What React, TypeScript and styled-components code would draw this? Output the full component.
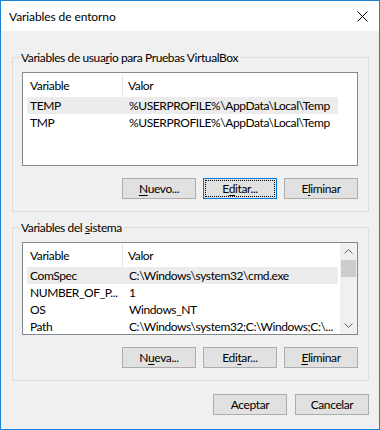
import React from "react";
import styled, { createGlobalStyle } from "styled-components";

const GlobalStyle = createGlobalStyle`
  html, body { margin: 0; padding: 0; background: #f0f0f0; }
  body { font-family: Lato, "Liberation Sans", sans-serif; font-size: 12px; letter-spacing: -0.4px; color: #000; }
`;

type Row = { name: string; value: string; selected?: boolean };

const userVars: Row[] = [
  { name: "TEMP", value: "%USERPROFILE%\\AppData\\Local\\Temp", selected: true },
  { name: "TMP", value: "%USERPROFILE%\\AppData\\Local\\Temp" },
];

const systemVars: Row[] = [
  { name: "ComSpec", value: "C:\\Windows\\system32\\cmd.exe", selected: true },
  { name: "NUMBER_OF_P...", value: "1" },
  { name: "OS", value: "Windows_NT" },
  { name: "Path", value: "C:\\Windows\\system32;C:\\Windows;C:\\..." },
];

const Chevron = ({ up }: { up?: boolean }) => (
  <svg width="9" height="5" viewBox="0 0 9 5">
    <polyline
      points={up ? "0.5,4.5 4.5,0.5 8.5,4.5" : "0.5,0.5 4.5,4.5 8.5,0.5"}
      fill="none"
      stroke="#606060"
      strokeWidth="1"
    />
  </svg>
);

const VarList = ({ rows, height, scroll }: { rows: Row[]; height: number; scroll?: boolean }) => (
  <ListBox $height={height}>
    <ListBody>
      <Header>
        <HeaderCell $first>Variable</HeaderCell>
        <HeaderCell>Valor</HeaderCell>
      </Header>
      {rows.map((r) => (
        <ListRow key={r.name} $selected={r.selected}>
          <NameCell>{r.name}</NameCell>
          <ValueCell>{r.value}</ValueCell>
        </ListRow>
      ))}
    </ListBody>
    {scroll && (
      <ScrollBar>
        <ScrollArrow><Chevron up /></ScrollArrow>
        <ScrollTrack>
          <Thumb />
        </ScrollTrack>
        <ScrollArrow><Chevron /></ScrollArrow>
      </ScrollBar>
    )}
  </ListBox>
);

const App = () => {
  return (
    <>
      <GlobalStyle />
      <Window>
        <TitleBar>
          <Title>Variables de entorno</Title>
          <CloseBtn>
            <svg width="11" height="11" viewBox="0 0 11 11">
              <path d="M0.5 0.5 L10.5 10.5 M10.5 0.5 L0.5 10.5" stroke="#000" strokeWidth="1" />
            </svg>
          </CloseBtn>
        </TitleBar>
        <Body>
          <Group>
            <Legend>Variables de usua<u>r</u>io para Pruebas VirtualBox</Legend>
            <VarList rows={userVars} height={94} />
            <ButtonRow>
              <Button><u>N</u>uevo...</Button>
              <Button $focused>E<u>d</u>itar...</Button>
              <Button>E<u>l</u>iminar</Button>
            </ButtonRow>
          </Group>
          <Group $second>
            <Legend>Variables del <u>s</u>istema</Legend>
            <VarList rows={systemVars} height={93} scroll />
            <ButtonRow>
              <Button>N<u>u</u>eva...</Button>
              <Button>Edi<u>t</u>ar...</Button>
              <Button><u>E</u>liminar</Button>
            </ButtonRow>
          </Group>
          <DialogButtons>
            <Button>Aceptar</Button>
            <Button>Cancelar</Button>
          </DialogButtons>
        </Body>
      </Window>
    </>
  );
};

// STYLED COMPONENTS //
const Window = styled.div`
  width: 380px;
  height: 430px;
  box-sizing: border-box;
  border: 1px solid #1883d7;
  background: #f0f0f0;
  display: flex;
  flex-direction: column;
`;

const TitleBar = styled.div`
  height: 30px;
  background: #fff;
  display: flex;
  align-items: center;
  justify-content: space-between;
  padding-left: 8px;
`;

const Title = styled.div`
  font-size: 12px;
  letter-spacing: -0.1px;
`;

const CloseBtn = styled.div`
  width: 46px;
  height: 30px;
  display: flex;
  align-items: center;
  justify-content: center;
  margin-right: -6px;
`;

const Body = styled.div`
  flex: 1;
  display: flex;
  flex-direction: column;
  padding: 19px 10px 0 11px;
`;

const Group = styled.fieldset<{ $second?: boolean }>`
  margin: ${(p) => (p.$second ? "8px" : "0")} 0 0 0;
  padding: 7px 10px 12px 9px;
  border: 1px solid #dcdcdc;
  min-width: 0;
  display: flex;
  flex-direction: column;
`;

const Legend = styled.legend`
  padding: 0 2px;
  margin-left: -3px;
  line-height: 15px;
`;

const ListBox = styled.div<{ $height: number }>`
  height: ${(p) => p.$height}px;
  box-sizing: border-box;
  border: 1px solid #828790;
  background: #fff;
  display: flex;
  overflow: hidden;
`;

const ListBody = styled.div`
  flex: 1;
  display: flex;
  flex-direction: column;
  overflow: hidden;
`;

const Header = styled.div`
  height: 24px;
  display: flex;
  align-items: stretch;
  flex-shrink: 0;
  padding-top: 1px;
  box-sizing: border-box;
`;

const HeaderCell = styled.div<{ $first?: boolean }>`
  display: flex;
  align-items: center;
  width: ${(p) => (p.$first ? "92px" : "auto")};
  padding-left: ${(p) => (p.$first ? "7px" : "5px")};
  border-right: ${(p) => (p.$first ? "1px solid #e5e5e5" : "none")};
  flex-shrink: 0;
`;

const ListRow = styled.div<{ $selected?: boolean }>`
  height: 17px;
  width: 311px;
  margin-left: 4px;
  display: flex;
  align-items: center;
  flex-shrink: 0;
  background: ${(p) => (p.$selected ? "#ececec" : "transparent")};
`;

const NameCell = styled.div`
  width: 93px;
  padding-left: 3px;
  white-space: nowrap;
  overflow: hidden;
  flex-shrink: 0;
`;

const ValueCell = styled.div`
  flex: 1;
  padding-left: 6px;
  white-space: nowrap;
  overflow: hidden;
`;

const ScrollBar = styled.div`
  width: 17px;
  background: #f0f0f0;
  display: flex;
  flex-direction: column;
  flex-shrink: 0;
`;

const ScrollArrow = styled.div`
  height: 17px;
  display: flex;
  align-items: center;
  justify-content: center;
  flex-shrink: 0;
`;

const ScrollTrack = styled.div`
  flex: 1;
  display: flex;
  flex-direction: column;
  align-items: center;
`;

const Thumb = styled.div`
  width: 15px;
  height: 17px;
  background: #cdcdcd;
`;

const ButtonRow = styled.div`
  display: flex;
  justify-content: flex-end;
  gap: 7px;
  margin-top: 12px;
`;

const DialogButtons = styled.div`
  display: flex;
  justify-content: flex-end;
  gap: 8px;
  margin-top: 13px;
`;

const Button = styled.div<{ $focused?: boolean }>`
  width: 74px;
  height: 21px;
  box-sizing: border-box;
  border: 1px solid ${(p) => (p.$focused ? "#0078d7" : "#adadad")};
  background: #e1e1e1;
  display: flex;
  align-items: center;
  justify-content: center;
  outline: ${(p) => (p.$focused ? "1px dotted #000" : "none")};
  outline-offset: -3px;
  u { text-decoration-thickness: 1px; text-underline-offset: 2px; }
`;

export default App;
